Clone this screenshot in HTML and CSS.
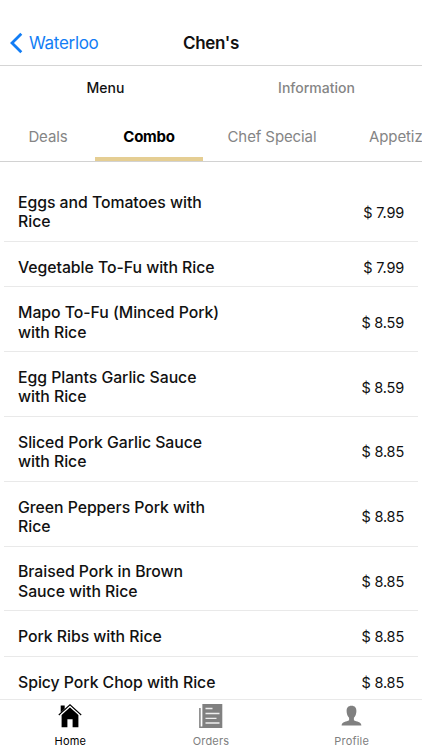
FILE: index.html
```html
<!DOCTYPE html>
<html lang="en">
<head>
<meta charset="utf-8">
<title>Chen's</title>
<link rel="stylesheet" href="styles.css">
</head>
<body>
<div class="app">
  <header class="navbar">
    <a class="back"><svg class="chevron" width="14" height="22" viewBox="0 0 14 22"><path d="M12.300 1.700 3 11l9.300 9.300" fill="none" stroke="currentColor" stroke-width="2.800"/></svg><span>Waterloo</span></a>
    <h1 class="title">Chen's</h1>
    <span></span>
  </header>
  <nav class="sections"><span class="section active">Menu</span><span class="section">Information</span></nav>
  <nav class="categories">
    <span class="category deals">Deals</span>
    <span class="category combo active">Combo</span>
    <span class="category chef">Chef Special</span>
    <span class="category appetizers">Appetizers</span>
  </nav>
  <main class="menu">
    <div class="item"><span class="name">Eggs and Tomatoes with<br>Rice</span><span class="price">$ 7.99</span></div>
    <div class="item"><span class="name">Vegetable To-Fu with Rice</span><span class="price">$ 7.99</span></div>
    <div class="item"><span class="name">Mapo To-Fu (Minced Pork)<br>with Rice</span><span class="price">$ 8.59</span></div>
    <div class="item"><span class="name">Egg Plants Garlic Sauce<br>with Rice</span><span class="price">$ 8.59</span></div>
    <div class="item"><span class="name">Sliced Pork Garlic Sauce<br>with Rice</span><span class="price">$ 8.85</span></div>
    <div class="item"><span class="name">Green Peppers Pork with<br>Rice</span><span class="price">$ 8.85</span></div>
    <div class="item"><span class="name">Braised Pork in Brown<br>Sauce with Rice</span><span class="price">$ 8.85</span></div>
    <div class="item"><span class="name">Pork Ribs with Rice</span><span class="price">$ 8.85</span></div>
    <div class="item"><span class="name">Spicy Pork Chop with Rice</span><span class="price">$ 8.85</span></div>
  </main>
  <footer class="tabbar">
    <div class="tab active">
      <svg width="24" height="24" viewBox="0 0 24 24"><path d="M2.700 1.500h4v3.200l-4 3.800zM12 3.200 3.600 11v12.200h5.800v-8h5.200v8h5.800V11z" fill="currentColor"/><path d="M.8 11 12 .9 23.200 11" fill="none" stroke="currentColor" stroke-width="1.200"/><path d="M2.300 11.200 12 2.500l9.700 8.700" fill="none" stroke="#fff" stroke-width=".9"/></svg>
      <span>Home</span>
    </div>
    <div class="tab">
      <svg width="24" height="24" viewBox="0 0 24 24"><path d="M3.300 0H23.300v24H3.300z" fill="currentColor"/><path d="M.9 4v19.300h4" fill="none" stroke="currentColor" stroke-width="1.500"/><path d="M2.600 0v21.500" stroke="#fff" stroke-width="1"/><path d="M6.500 4.500h7M6.500 9.500h14M6.500 14.300h11M6.500 19h14" stroke="#eee" stroke-width="1.300"/></svg>
      <span>Orders</span>
    </div>
    <div class="tab">
      <svg width="24" height="24" viewBox="0 0 24 24"><path d="M11.500 1.800c3.500 0 4.900 2.100 4.900 5.300 0 3-1 5.300-2.500 6.600v2.600c2.500 1.500 7.400 1.400 7.500 5.200H1.600c.1-3.800 5-3.700 7.500-5.200v-2.600C7.600 12.400 6.600 10.100 6.600 7.100c0-3.200 1.400-5.300 4.900-5.300z" fill="currentColor"/></svg>
      <span>Profile</span>
    </div>
  </footer>
</div>
</body>
</html>
```
FILE: styles.css
```css
* { box-sizing: border-box; }
body { margin: 0; background: #fff; font-family: Inter, "Liberation Sans", sans-serif; }
.app { display: flex; flex-direction: column; width: 422px; height: 750px; overflow: hidden; color: #111; }
.navbar { flex: none; height: 66px; padding-top: 20px; border-bottom: 1px solid #d5d5d5; display: grid; grid-template-columns: 1fr auto 1fr; align-items: center; }
.back { display: flex; align-items: center; gap: 6px; padding-left: 9px; color: #127df5; font-size: 17px; letter-spacing: -.3px; }
.chevron { display: block; }
.title { margin: 0; font-size: 17px; font-weight: 600; letter-spacing: -.3px; }
.sections { flex: none; height: 45px; padding-bottom: 2px; display: grid; grid-template-columns: 1fr 1fr; align-items: center; text-align: center; font-size: 14px; font-weight: 500; color: #858585; }
.section.active { color: #111; }
.categories { flex: none; height: 51px; display: flex; border-bottom: 1px solid #d2d2d2; overflow: hidden; font-size: 15px; letter-spacing: -.1px; color: #858585; white-space: nowrap; }
.category { flex: none; height: 50px; line-height: 52px; text-align: center; }
.deals { width: 95px; padding-left: 1px; }
.combo { width: 108px; letter-spacing: -.25px; }
.chef { width: 138px; }
.appetizers { width: 130px; padding-left: 28px; text-align: left; }
.combo.active { color: #000; font-weight: 700; border-bottom: 4px solid #e5ce93; }
.menu { flex: 1; min-height: 0; overflow: hidden; padding: 15.200px 4px 0; }
.item { display: flex; justify-content: space-between; align-items: center; padding: 15.800px 14px 9.200px; border-bottom: 1px solid #e9e9e9; }
.name { font-size: 15.800px; font-weight: 500; line-height: 19.400px; letter-spacing: -.04px; }
.price { font-size: 14.500px; line-height: 19.400px; letter-spacing: -.2px; }
.tabbar { flex: none; height: 51px; border-top: 1px solid #e9e9e9; display: grid; grid-template-columns: 1fr 1fr 1fr; }
.tab { display: flex; flex-direction: column; align-items: center; gap: 6px; padding-top: 4px; color: #808080; font-size: 11px; line-height: 14px; letter-spacing: .2px; }
.tab.active { color: #000; }
```
